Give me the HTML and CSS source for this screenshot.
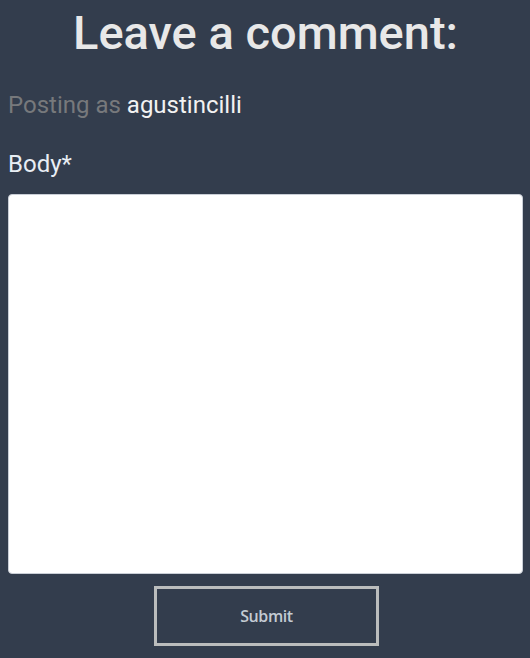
FILE: index.html
```html
<!DOCTYPE html>
<html>
<head>
<meta charset="utf-8">
<link rel="stylesheet" href="styles.css">
</head>
<body>
<div class="page">
  <h1 class="title">Leave a comment:</h1>
  <p class="posting"><span class="muted">Posting as</span> <span class="user">agustincilli</span></p>
  <label class="label" for="body">Body*</label>
  <textarea id="body" class="body-input"></textarea>
  <div class="actions">
    <button class="submit" type="button">Submit</button>
  </div>
</div>
</body>
</html>
```

FILE: styles.css
```css
html, body {
  margin: 0;
  padding: 0;
  background: #333d4d;
}
.page {
  padding: 0 7px 0 8px;
  display: flex;
  flex-direction: column;
  font-family: Roboto, "Liberation Sans", sans-serif;
}
.title {
  margin: 0;
  padding-top: 3px;
  text-align: center;
  font-size: 47px;
  font-weight: 500;
  line-height: 60px;
  color: #e8e8e8;
}
.posting {
  margin: 28px 0 0 0;
  font-size: 24px;
  line-height: 28px;
}
.muted { color: #77797c; }
.user { color: #f2f2f2; }
.label {
  margin-top: 31px;
  font-size: 24px;
  line-height: 28px;
  color: #e8eef4;
}
.body-input {
  margin-top: 16px;
  height: 380px;
  box-sizing: border-box;
  width: 100%;
  border: 1px solid #c9ced6;
  border-radius: 4px;
  background: #fff;
  resize: none;
}
.actions {
  display: flex;
  justify-content: center;
  margin-top: 12px;
}
.submit {
  width: 225px;
  height: 60px;
  background: transparent;
  border: 3px solid #bbbdbd;
  color: #c3cbd3;
  font-family: "Open Sans", Lato, sans-serif;
  font-size: 16px;
  font-weight: 600;
  letter-spacing: -0.4px;
  margin-left: 2px;
}
```
